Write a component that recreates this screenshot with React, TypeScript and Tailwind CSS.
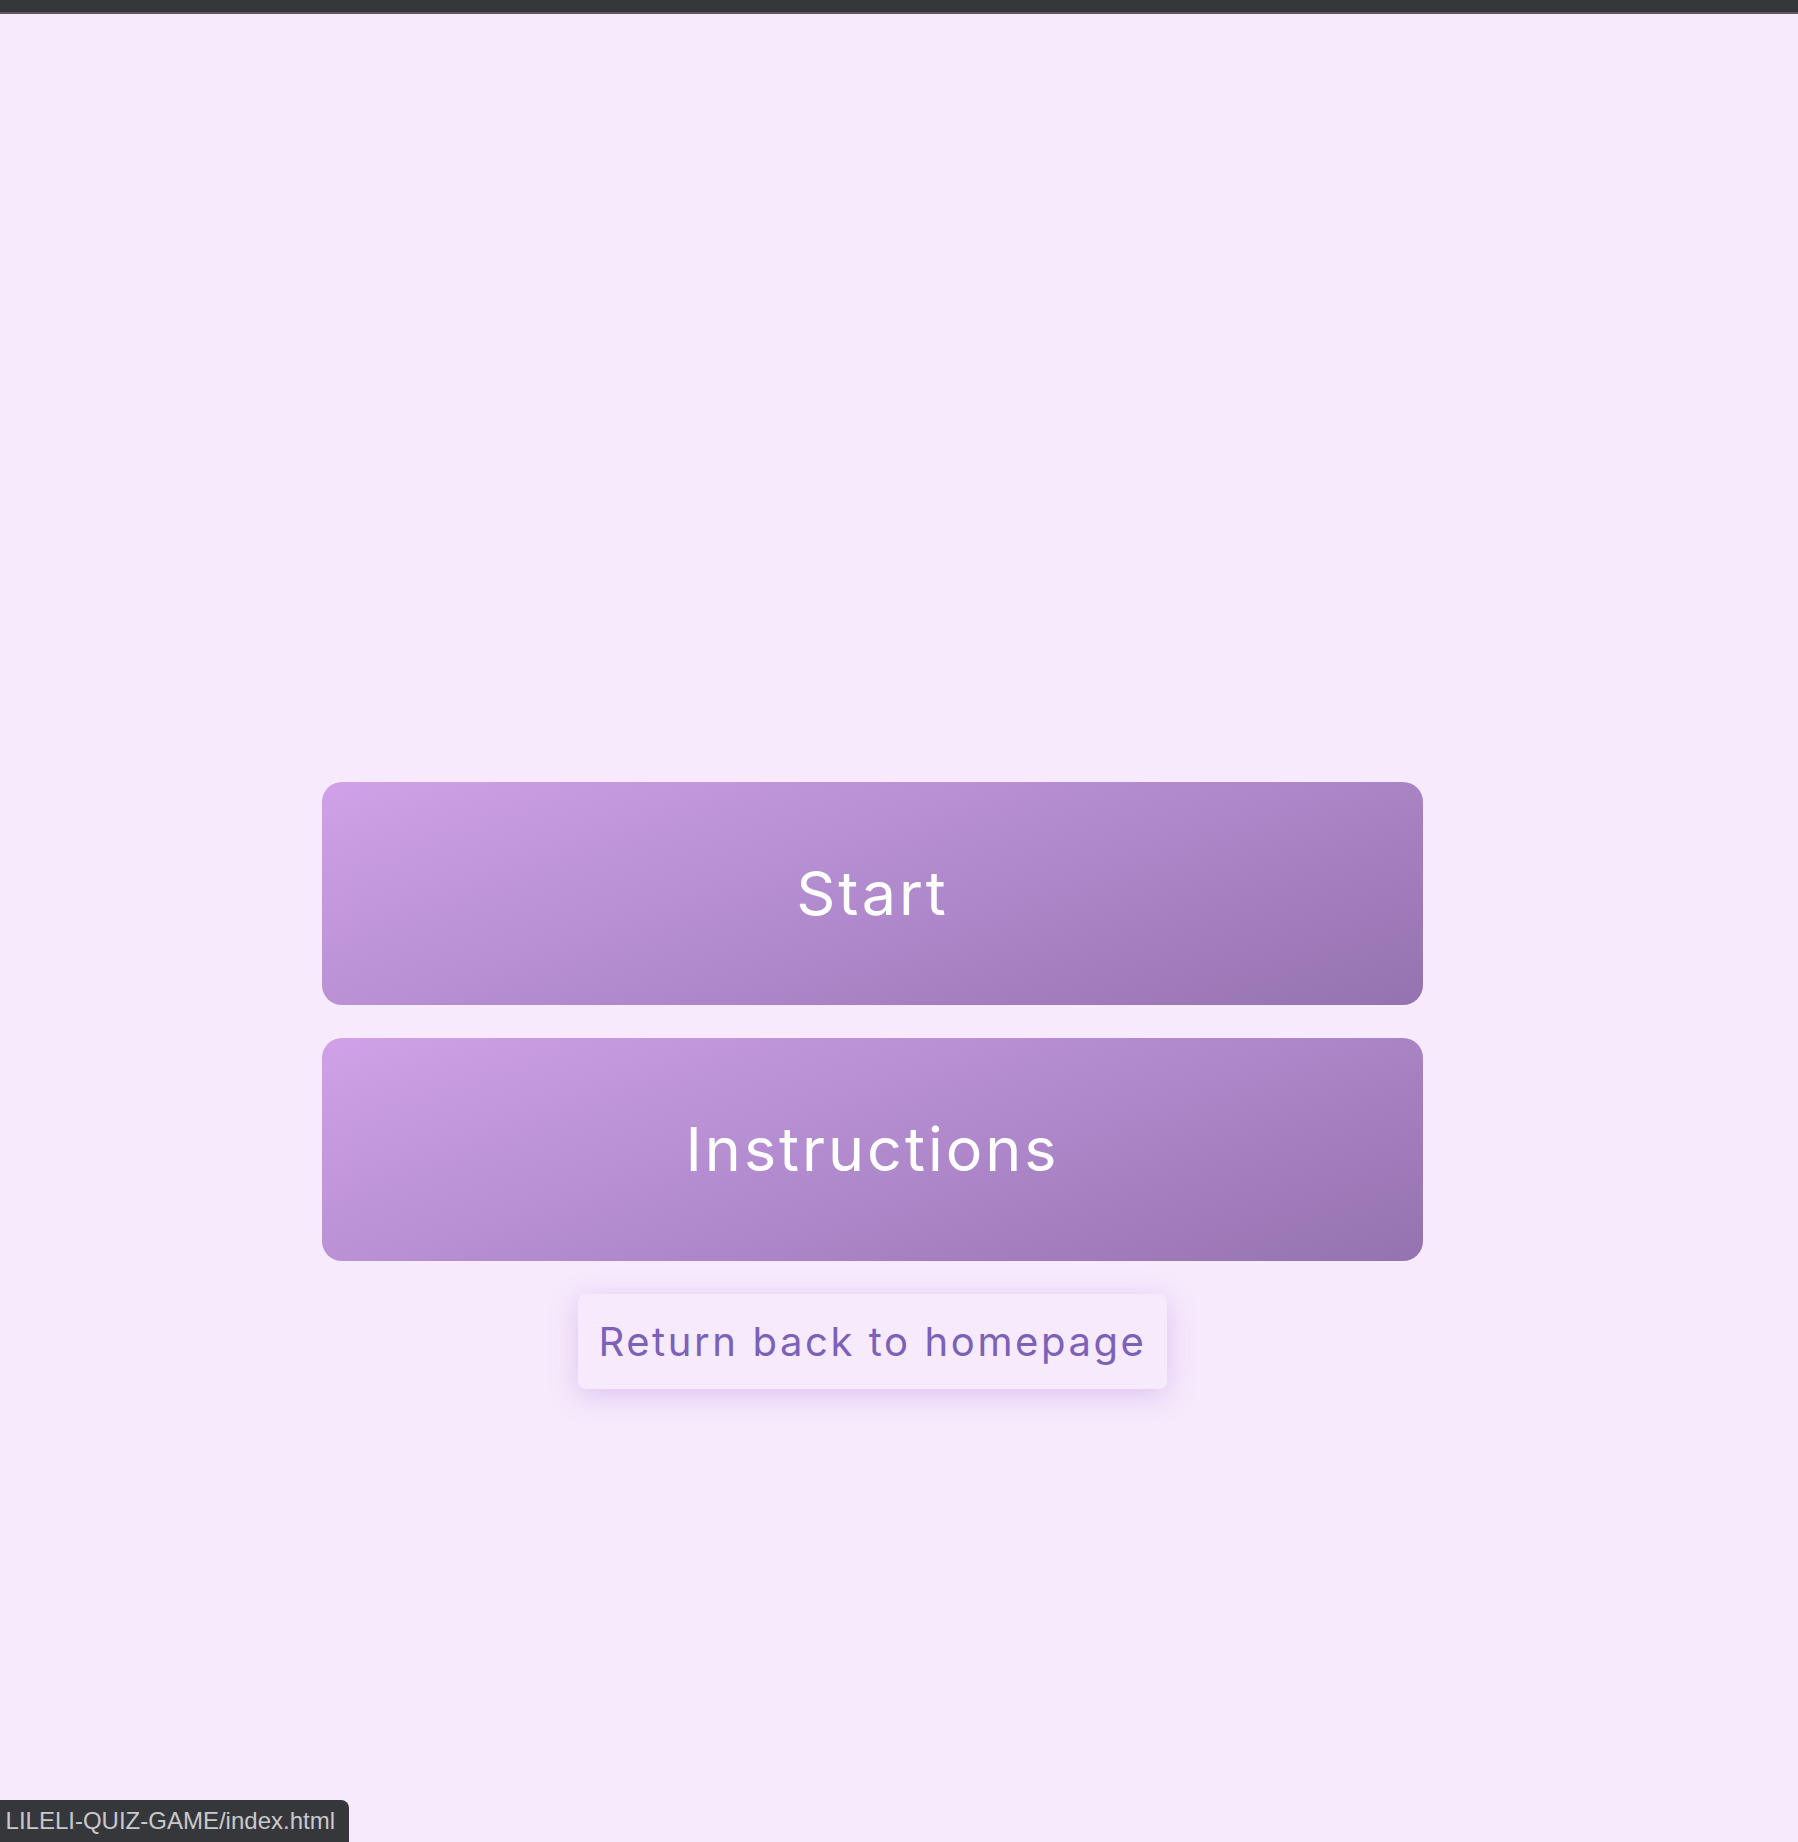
const menuItems = ["Start", "Instructions"];

export default function App() {
  return (
    <div className="relative min-h-[1842px] w-full bg-[#f7eafc] font-['Inter',sans-serif]">
      <div className="h-[12px] w-full bg-[#36373b]" />
      <div className="h-[2px] w-full bg-[#5b5b60]" />

      <main className="flex flex-col items-center gap-[33px] pt-[768px] pr-[53px]">
        {menuItems.map((item) => (
          <button
            key={item}
            className="flex h-[223px] w-[1101px] items-center justify-center rounded-[20px] bg-[linear-gradient(160deg,#d0a1e8_0%,#b48dd0_45%,#9572b0_100%)] text-[61px] font-normal tracking-[3px] text-white"
          >
            {item}
          </button>
        ))}

        <button className="flex h-[95px] w-[589px] items-center justify-center rounded-[8px] bg-[#f7eafc] text-[40px] tracking-[2.6px] text-[#7b62b8] shadow-[0_6px_28px_rgba(176,120,220,0.35)]">
          Return back to homepage
        </button>
      </main>

      <div className="fixed bottom-0 left-0 flex h-[42px] w-[349px] items-center justify-end overflow-hidden rounded-tr-[8px] bg-[#36373b] pr-[14px]">
        <span className="whitespace-nowrap font-['Liberation_Sans',sans-serif] text-[24px] text-[#c9c9cd]">
          LILELI-QUIZ-GAME/index.html
        </span>
      </div>
    </div>
  );
}
